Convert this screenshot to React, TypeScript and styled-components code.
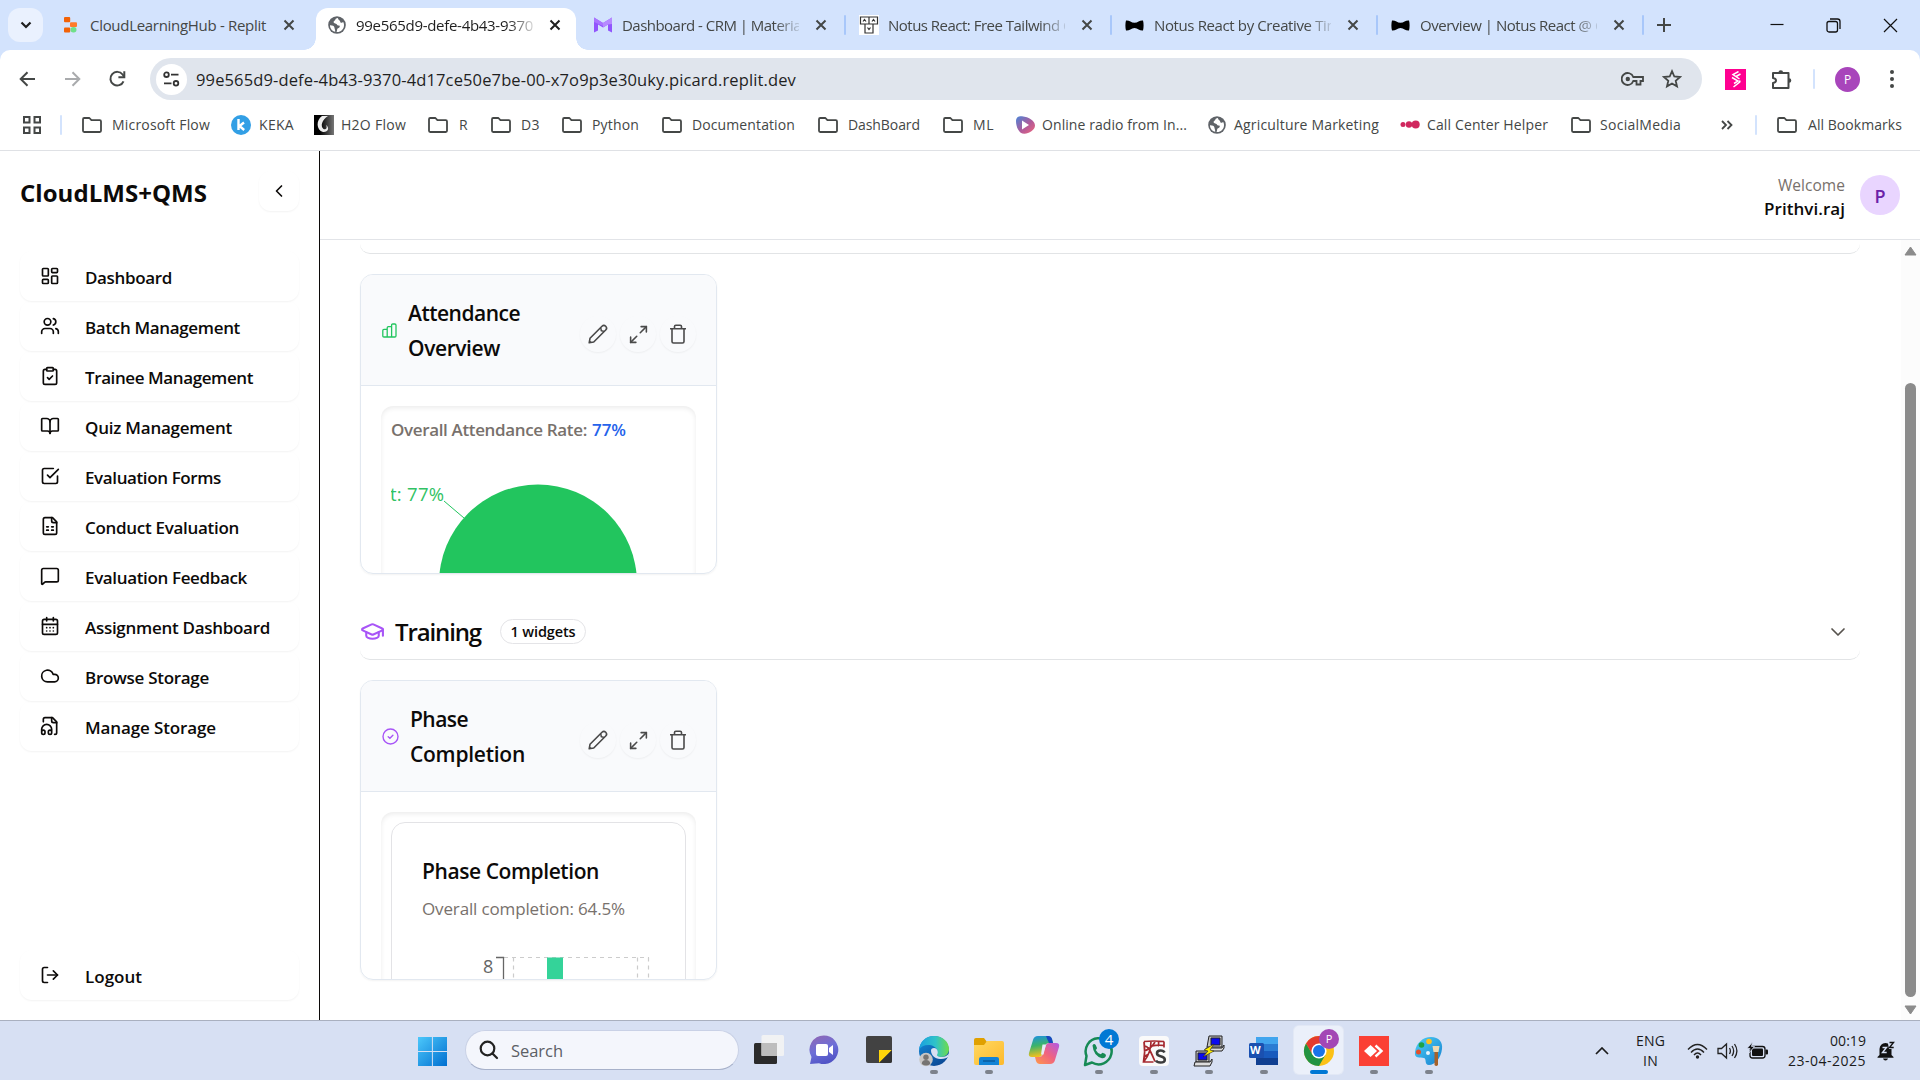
import React, { useLayoutEffect, useRef } from "react";
import styled, { createGlobalStyle, css } from "styled-components";
import {
  LayoutDashboard, Users, ClipboardCheck, BookOpen, MessageSquare, CalendarDays, Cloud, LogOut,
  ChevronLeft, ChevronDown, Maximize2, GraduationCap,
} from "lucide-react";

const Global = createGlobalStyle`
  * { box-sizing: border-box; }
  html, body { margin: 0; padding: 0; overflow: hidden; }
  body { font-family: "Open Sans", "Noto Sans", sans-serif; color: #0c0a09; background: #fff; }
  svg { display: block; flex: none; }
`;

/* ---------- text with a fixed advance width ---------- */
const FitSpan = styled.span<{ $size: number; $weight?: number; $color?: string; $line?: number }>`
  display: inline-block;
  flex: none;
  white-space: pre;
  font-size: ${(p) => p.$size}px;
  font-weight: ${(p) => p.$weight ?? 400};
  line-height: ${(p) => p.$line ?? 24}px;
  ${(p) => p.$color && css`color: ${p.$color};`}
`;

type FitProps = { w: number; size: number; weight?: number; color?: string; line?: number; children: string };
function Fit({ w, size, weight, color, line, children }: FitProps) {
  const ref = useRef<HTMLSpanElement>(null);
  useLayoutEffect(() => {
    const el = ref.current;
    if (!el) return;
    el.style.letterSpacing = "0px";
    const natural = el.getBoundingClientRect().width;
    el.style.letterSpacing = `${(w - natural) / children.length}px`;
  }, [w, children]);
  return <FitSpan ref={ref} $size={size} $weight={weight} $color={color} $line={line}>{children}</FitSpan>;
}

/* ---------- shell ---------- */
const Screen = styled.div`
  width: 1920px;
  height: 1080px;
  display: flex;
  flex-direction: column;
  overflow: hidden;
  background: #fff;
`;

/* ---------- tab strip ---------- */
const Strip = styled.div`
  height: 50px;
  flex: none;
  display: flex;
  align-items: flex-start;
  background: #d3e3fd;
  padding: 8px 0 0 8px;
`;
const StripButton = styled.div`
  width: 35px;
  height: 34px;
  border-radius: 12px;
  background: #eaf1fe;
  display: grid;
  place-items: center;
  margin-right: 5px;
`;
const TabBox = styled.div<{ $active?: boolean }>`
  width: 266px;
  height: 42px;
  display: flex;
  align-items: center;
  position: relative;
  padding: 0 0 8px 12px;
  ${(p) => p.$active && css`
    &::before {
      content: "";
      position: absolute;
      inset: 0 4px 0 2px;
      background: #fff;
      border-radius: 12px 12px 0 0;
    }
    &::after {
      content: "";
      position: absolute;
      left: -10px;
      right: -8px;
      bottom: 0;
      height: 12px;
      background:
        radial-gradient(circle at 0 0, transparent 11.5px, #fff 12px) left / 12px 12px no-repeat,
        radial-gradient(circle at 100% 0, transparent 11.5px, #fff 12px) right / 12px 12px no-repeat;
    }
  `}
  > * { position: relative; }
`;
const Favicon = styled.span`
  width: 21px;
  display: grid;
  place-items: center;
`;
const TabTitle = styled.span`
  width: 177px;
  height: 24px;
  margin-left: 9px;
  overflow: hidden;
  display: flex;
  mask-image: linear-gradient(90deg, #000 86%, transparent 103%);
`;
const CloseX = styled.span`
  margin-left: 16px;
  width: 12px;
`;
const Divider = styled.span<{ $h?: number; $ml?: number; $mr?: number; $color?: string }>`
  width: 2px;
  height: ${(p) => p.$h ?? 20}px;
  border-radius: 1px;
  flex: none;
  background: ${(p) => p.$color ?? "#a8c7fa"};
  margin-left: ${(p) => p.$ml ?? 0}px;
  margin-right: ${(p) => p.$mr ?? 0}px;
`;
const NewTab = styled.div`
  height: 34px;
  width: 34px;
  margin-left: 3px;
  display: grid;
  place-items: center;
`;
const WindowButtons = styled.div`
  margin-left: auto;
  height: 34px;
  display: flex;
  align-items: center;
  gap: 42px;
  padding-right: 22px;
`;

/* ---------- address bar ---------- */
const ToolbarWrap = styled.div`
  background: #d3e3fd;
  flex: none;
`;
const Toolbar = styled.div`
  height: 58px;
  background: #fff;
  border-radius: 10px 10px 0 0;
  display: flex;
  align-items: center;
  padding: 0 23px 0 17px;
`;
const NavIcons = styled.div`
  width: 133px;
  display: flex;
  gap: 24px;
`;
const Omnibox = styled.div`
  width: 1552px;
  height: 42px;
  border-radius: 21px;
  background: #e0e5ed;
  display: flex;
  align-items: center;
  padding: 0 20px 0 6px;
  > span:nth-child(2) { margin-top: 2px; }
`;
const SiteInfo = styled.span`
  width: 31px;
  height: 31px;
  border-radius: 50%;
  background: #fff;
  display: grid;
  place-items: center;
  margin-right: 9px;
`;
const OmniActions = styled.span`
  margin-left: auto;
  display: flex;
  align-items: center;
  gap: 18px;
`;
const ToolActions = styled.div`
  margin-left: auto;
  display: flex;
  align-items: center;
`;
const PinkBadge = styled.span`
  width: 21px;
  height: 21px;
  background: #ff0090;
  display: grid;
  place-items: center;
`;
const SmallAvatar = styled.span`
  width: 25px;
  height: 25px;
  border-radius: 50%;
  background: #a845bb;
  color: #fff;
  font-size: 12px;
  display: grid;
  place-items: center;
`;

/* ---------- bookmarks ---------- */
const BookmarkBar = styled.div`
  height: 43px;
  flex: none;
  display: flex;
  align-items: center;
  padding: 0 0 9px 22px;
  border-bottom: 1px solid #dfe1e5;
`;
const BookmarkItem = styled.div<{ $ml: number; $gap: number }>`
  display: flex;
  align-items: center;
  gap: ${(p) => p.$gap}px;
  margin-left: ${(p) => p.$ml}px;
`;
const IconSlot = styled.span`
  width: 20px;
  display: grid;
  place-items: center;
`;

/* ---------- page ---------- */
const Page = styled.div`
  height: 869px;
  flex: none;
  display: flex;
`;
const Sidebar = styled.aside`
  width: 320px;
  border-right: 1px solid #0c0a09;
  padding: 20px 20px 20px;
  display: flex;
  flex-direction: column;
`;
const Brand = styled.div`
  display: flex;
  justify-content: space-between;
  align-items: center;
  height: 40px;
  > span:first-child { margin-top: 3px; }
`;
const Collapse = styled.span`
  width: 40px;
  height: 40px;
  border-radius: 12px;
  display: grid;
  place-items: center;
  box-shadow: 0 1px 2px rgba(0, 0, 0, 0.05);
`;
const NavList = styled.nav`
  margin-top: 40px;
  display: flex;
  flex-direction: column;
`;
const NavItem = styled.div`
  height: 50px;
  flex: none;
  border-radius: 12px;
  display: flex;
  align-items: center;
  gap: 25px;
  padding: 0 0 0 20px;
  box-shadow: 0 1px 2px rgba(0, 0, 0, 0.05);
  > span { margin-top: 3px; }
`;
const Footer = styled.div`
  margin-top: auto;
`;
const Main = styled.main`
  flex: 1;
  display: flex;
  flex-direction: column;
  min-width: 0;
`;
const TopBar = styled.header`
  height: 89px;
  flex: none;
  border-bottom: 1px solid #e2e4e8;
  display: flex;
  align-items: center;
  justify-content: flex-end;
  gap: 15px;
  padding-right: 20px;
`;
const Who = styled.div`
  display: flex;
  flex-direction: column;
  align-items: flex-end;
  margin-top: 3px;
`;
const Avatar = styled.span`
  width: 40px;
  height: 40px;
  border-radius: 50%;
  background: #e9d5ff;
  color: #6b21a8;
  font-size: 18px;
  font-weight: 600;
  line-height: 42px;
  text-align: center;
`;
const Body = styled.div`
  flex: 1;
  min-height: 0;
  display: flex;
`;
const Content = styled.div`
  width: 1581px;
  padding-left: 40px;
  overflow: hidden;
`;
const SectionBar = styled.div<{ $h: number; $mt?: number }>`
  width: 1500px;
  height: ${(p) => p.$h}px;
  margin-top: ${(p) => p.$mt ?? 0}px;
  border-bottom: 1px solid #e2e4e6;
  border-radius: 0 0 10px 10px;
  display: flex;
  align-items: center;
  padding: 0 10px 0 0;
`;
const Badge = styled.span`
  height: 25px;
  width: 86px;
  margin-left: 19px;
  border: 1px solid #e4e4e7;
  border-radius: 13px;
  display: flex;
  justify-content: center;
  align-items: center;
`;
const Push = styled.span`
  margin-left: auto;
`;
const Card = styled.section`
  width: 357px;
  height: 300px;
  margin-top: 20px;
  border: 1px solid #e2e8f0;
  border-radius: 13px;
  overflow: hidden;
  box-shadow: 0 1px 2px rgba(0, 0, 0, 0.05);
`;
const CardHead = styled.div`
  height: 111px;
  background: #f9fafc;
  border-bottom: 1px solid #e2e8f0;
  display: flex;
  align-items: center;
  padding: 0 20px 0 21px;
`;
const CardTitle = styled.h3`
  margin: 2px 0 0 11px;
  display: flex;
  flex-direction: column;
  align-items: flex-start;
`;
const HeadIcon = styled.span`
  margin-top: 0;
`;
const CardActions = styled.div`
  margin-left: auto;
  margin-top: 8px;
  display: flex;
  gap: 4px;
`;
const RoundButton = styled.span`
  width: 36px;
  height: 36px;
  border-radius: 50%;
  display: grid;
  place-items: center;
  color: #4a4a4a;
  box-shadow: 0 1px 2px rgba(0, 0, 0, 0.05);
`;
const Panel = styled.div`
  width: 315px;
  height: 300px;
  margin: 20px 0 0 20px;
  border-radius: 12px;
  padding: 10px;
  box-shadow: inset 0 2px 5px rgba(0, 0, 0, 0.08);
`;
const Rate = styled.div`
  height: 27px;
  display: flex;
  align-items: center;
  gap: 5px;
`;
const InnerCard = styled.div`
  height: 300px;
  border: 1px solid #e3e3e6;
  border-radius: 14px;
  background: #fff;
  padding: 31px 30px;
  display: flex;
  flex-direction: column;
  align-items: flex-start;
`;
const ChartSlot = styled.div`
  padding: 1px 0 0 1px;
`;

/* ---------- scrollbar ---------- */
const Scrollbar = styled.div`
  width: 19px;
  background: #fcfcfc;
  display: flex;
  flex-direction: column;
  align-items: center;
  padding: 6px 0 5px;
`;
const Thumb = styled.span`
  width: 11px;
  height: 614px;
  margin: auto 0 8px;
  border-radius: 6px;
  background: #8b8b8b;
`;

/* ---------- taskbar ---------- */
const Taskbar = styled.footer`
  height: 60px;
  flex: none;
  border-top: 1px solid #a9b0bf;
  background: #d7e0f3;
  display: flex;
  align-items: flex-start;
  padding-left: 417px;
`;
const Start = styled.span`
  padding-top: 15px;
`;
const SearchPill = styled.div`
  width: 274px;
  height: 40px;
  margin: 9px 0 0 18px;
  border-radius: 20px;
  background: #f4f6fc;
  border: 1px solid #c9d1e6;
  border-bottom-color: #a7b1ca;
  display: flex;
  align-items: center;
  gap: 12px;
  padding-left: 13px;
  > span { margin-top: 1px; }
`;
const Apps = styled.div`
  display: flex;
  margin-left: 2px;
`;
const AppSlot = styled.div<{ $active?: boolean }>`
  width: 49px;
  height: 48px;
  margin: 5px 3px 0;
  border-radius: 5px;
  display: flex;
  flex-direction: column;
  align-items: center;
  justify-content: space-between;
  padding-top: 9px;
  position: relative;
  ${(p) => p.$active && css`
    background: #ebf0fa;
    box-shadow: 0 0 0 1px #e2e8f5;
  `}
`;
const RunMark = styled.span<{ $active?: boolean }>`
  width: ${(p) => (p.$active ? 18 : 8)}px;
  height: 4px;
  border-radius: 2px;
  background: ${(p) => (p.$active ? "#0078d4" : "#7d828c")};
`;
const Count = styled.span<{ $color: string; $small?: boolean }>`
  position: absolute;
  top: 3px;
  left: 25px;
  width: 20px;
  height: 20px;
  border-radius: 50%;
  background: ${(p) => p.$color};
  color: #fff;
  font-size: ${(p) => (p.$small ? 11 : 15)}px;
  line-height: 20px;
  text-align: center;
`;
const Tray = styled.div`
  margin-left: auto;
  height: 59px;
  display: flex;
  align-items: center;
  padding-right: 25px;
`;
const TrayStack = styled.div<{ $ml: number; $right?: boolean }>`
  margin-left: ${(p) => p.$ml}px;
  display: flex;
  flex-direction: column;
  align-items: ${(p) => (p.$right ? "flex-end" : "center")};
`;
const TrayIcon = styled.span<{ $ml: number }>`
  margin-left: ${(p) => p.$ml}px;
`;

/* ---------- drawings ---------- */
const Cross = ({ color = "#444746" }: { color?: string }) => (
  <svg width="12" height="12" viewBox="0 0 12 12" stroke={color} strokeWidth="2"><path d="M1.5 1.5l9 9M10.5 1.5l-9 9" /></svg>
);
const Folder = () => (
  <svg width="20" height="16" viewBox="0 0 20 16" fill="none" stroke="#444746" strokeWidth="1.8" strokeLinejoin="round">
    <path d="M1 2.2Q1 1 2.2 1H7.4L9.4 3.2H17.8Q19 3.2 19 4.4V13.8Q19 15 17.8 15H2.2Q1 15 1 13.8Z" />
  </svg>
);
const Globe = ({ s = 19 }: { s?: number }) => (
  <svg width={s} height={s} viewBox="0 0 20 20">
    <circle cx="10" cy="10" r="9.8" fill="#5f6368" />
    <path d="M11 2.200C7.500 2.500 9 4.200 7.200 5.200 5.500 6.200 6 8 8 8.200 10.500 8.400 9.500 10.500 12 10.500 14 10.600 13 13 11.200 13.600 9.600 14.200 10.500 16 9.500 17.800 14 18.200 17.800 15 17.800 10 17.800 8.500 17.300 7.500 16.800 6.800 15 8.500 13.500 7 13.500 6 13.500 4.500 11.500 5 11 2.200Z" fill="#fff" />
    <path d="M2.200 10.300C4.500 10.200 7 11 7.200 13 7.400 14.800 8.200 15.500 8 17.500 4.500 16.800 2.200 14 2.200 10.300Z" fill="#fff" />
  </svg>
);
const ReplitLogo = () => (
  <svg width="13" height="16" viewBox="0 0 13 16">
    <rect width="6.200" height="5.200" rx="1" fill="#f26207" />
    <rect x="6" y="5.200" width="7" height="4.800" rx="1" fill="#ff7a2a" />
    <rect y="10.400" width="6.200" height="5.200" rx="1" fill="#f26207" />
    <rect x="6.500" y="10" width="6" height="5.500" rx="2.700" fill="#6fe08a" />
  </svg>
);
const MuiLogo = () => (
  <svg width="20" height="16" viewBox="0 0 20 16">
    <path d="M1 .500 10 6 19 .500V15.500l-4-2V7.500L10 10.500 5 7.500v6l-4 2Z" fill="#9155fd" />
    <path d="M10 6 19 .500V7L15 7.500 10 10.500Z" fill="#b78aff" />
    <path d="M1 .500 10 6V9L1 5Z" fill="#a974ff" />
  </svg>
);
const NotusLogo = () => (
  <svg width="20" height="20" viewBox="0 0 20 20" fill="none" stroke="#333" strokeWidth="1.200">
    <rect width="20" height="20" fill="#fff" stroke="none" />
    <path d="M1.500 2h17v7h-17ZM10 2v7M6 9v9h8V9M4 6.500l1.500-2L7 6.500M13 6.500l1.500-2 1.500 2M8.500 12.500l1.500 2 1.500-2" />
  </svg>
);
const BowTie = () => (
  <svg width="19" height="11" viewBox="0 0 19 11"><path d="M1 .500C4 0 6 2.500 9.500 2.800 13 2.500 15 0 18 .500 18.800 3 18.800 8 18 10.500 15 11 13 8.300 9.500 8 6 8.300 4 11 1 10.500.200 8 .200 3 1 .500Z" fill="#000" /></svg>
);
const Keka = () => (
  <svg width="20" height="20" viewBox="0 0 20 20"><circle cx="10" cy="10" r="10" fill="#329fe5" /><path d="M7.500 4v11M13 7.500 8.500 11 13.200 15" stroke="#fff" strokeWidth="2.400" fill="none" /></svg>
);
const H2O = () => (
  <svg width="20" height="20" viewBox="0 0 20 20">
    <defs><linearGradient id="h2o"><stop offset=".3" stopColor="#000" /><stop offset="1" stopColor="#777" /></linearGradient></defs>
    <rect width="20" height="20" fill="url(#h2o)" />
    <path d="M8 1C2 5 2 15 9 17 14 17.500 16 13 12 10 14 14 11 15 9.500 14 6 11 8 5 14 1Z" fill="#eee" />
  </svg>
);
const Radio = () => (
  <svg width="20" height="18" viewBox="0 0 20 18">
    <defs><linearGradient id="radio" x2="1" y2="1"><stop offset="0" stopColor="#4a86d8" /><stop offset=".55" stopColor="#b05a9a" /><stop offset="1" stopColor="#f2667a" /></linearGradient></defs>
    <path d="M1 5C1 1 4 0 7 .300 14 1 20 5 20 9.500 20 14 14 17.500 9.500 17.800 4 18 1 11 1 5Z" fill="url(#radio)" /><path d="M7 4.500 14 9 7 13.500Z" fill="#fff" />
  </svg>
);
const Dots3 = () => (
  <svg width="20" height="9" viewBox="0 0 20 9" fill="#d0275e"><circle cx="3" cy="4.500" r="2.500" /><circle cx="9" cy="4.500" r="3.200" /><circle cx="15.700" cy="4.500" r="4" /></svg>
);
const BarsIcon = () => (
  <svg width="15" height="15" viewBox="0 0 15 15" fill="none" stroke="#22c55e" strokeWidth="1.300">
    <path d="M.800 7.600Q.800 6.400 2 6.400H5.200V14H2Q.800 14 .800 12.800ZM5.200 14V5Q5.200 3.700 6.400 3.700H9.600V14ZM9.600 14V2.200Q9.600 1 10.800 1H12.800Q14 1 14 2.200V12.800Q14 14 12.800 14ZM5.200 14h4.400" />
  </svg>
);
const CheckCircle = () => (
  <svg width="17" height="17" viewBox="0 0 17 17" fill="none" stroke="#a855f7" strokeWidth="1.400" strokeLinecap="round"><circle cx="8.500" cy="8.500" r="7.500" /><path d="M6.200 8.700l1.700 1.500 3-3" /></svg>
);
const Pen = () => (
  <svg width="20" height="20" viewBox="0 0 20 20" fill="none" stroke="currentColor" strokeWidth="1.600" strokeLinejoin="round">
    <path d="M1.200 18.800 2 14.300 14 2.300a2.600 2.600 0 0 1 3.700 3.700L5.700 18Z" /><path d="M12.200 4.100Q13.200 4.400 13.300 6.700 15.700 6.800 15.900 7.800M1.800 17.500l1 .800" />
  </svg>
);
const Bin = () => (
  <svg width="18" height="20" viewBox="0 0 18 20" fill="none" stroke="currentColor" strokeWidth="1.600">
    <path d="M1 4.800h16M3 4.800V17.500Q3 19 4.500 19h9q1.500 0 1.500-1.500V4.800M5.500 4.500V2.500Q5.500 1.200 6.800 1.200h4.400q1.300 0 1.300 1.300v2" />
  </svg>
);
const L = { size: 20, strokeWidth: 2 };
const SheetIcon = () => (
  <svg width="20" height="20" viewBox="0 0 24 24" fill="none" stroke="currentColor" strokeWidth="2" strokeLinecap="round" strokeLinejoin="round">
    <path d="M15 2H6a2 2 0 0 0-2 2v16a2 2 0 0 0 2 2h12a2 2 0 0 0 2-2V7Z" /><path d="M14 2v4a2 2 0 0 0 2 2h4M8 13h2M14 13h2M8 17h2M14 17h2" />
  </svg>
);
const AudioFile = () => (
  <svg width="20" height="20" viewBox="0 0 24 24" fill="none" stroke="currentColor" strokeWidth="2" strokeLinecap="round" strokeLinejoin="round">
    <path d="M17.500 22H18a2 2 0 0 0 2-2V7l-5-5H6a2 2 0 0 0-2 2v3" /><path d="M14 2v4a2 2 0 0 0 2 2h4" />
    <path d="M2 19a2 2 0 1 1 4 0v1a2 2 0 1 1-4 0v-4a6 6 0 0 1 12 0v4a2 2 0 1 1-4 0v-1a2 2 0 1 1 4 0" />
  </svg>
);
const CheckBox = () => (
  <svg width="20" height="20" viewBox="0 0 24 24" fill="none" stroke="currentColor" strokeWidth="2" strokeLinecap="round" strokeLinejoin="round">
    <path d="m9 11 3 3L22 4" /><path d="M21 12v7a2 2 0 0 1-2 2H5a2 2 0 0 1-2-2V5a2 2 0 0 1 2-2h11" />
  </svg>
);

/* taskbar drawings */
const WinLogo = () => (
  <svg width="30" height="30" viewBox="0 0 30 30">
    <defs><linearGradient id="win" x2="1" y2="1"><stop offset="0" stopColor="#4cc8fb" /><stop offset="1" stopColor="#006fd0" /></linearGradient></defs>
    <path d="M1 1h13.900v13.900H1ZM15.900 1H30v13.900H15.900ZM1 15.900h13.900V30H1ZM15.900 15.900H30V30H15.900Z" fill="url(#win)" />
  </svg>
);
const TaskView = () => (
  <svg width="30" height="30" viewBox="0 0 30 30"><rect x="0" y="8" width="23" height="21" rx="1.500" fill="#2b2b2b" /><rect x="7.500" y="0" width="22.500" height="21" rx="1.500" fill="#f2f2f2" opacity=".95" /><rect x="7.500" y="8" width="15.500" height="13" fill="#bdbdbd" /></svg>
);
const Chat = () => (
  <svg width="30" height="30" viewBox="0 0 30 30">
    <defs><linearGradient id="chat" x1=".2" x2=".6" y2="1"><stop offset="0" stopColor="#8f68b5" /><stop offset=".5" stopColor="#6d6fd8" /><stop offset="1" stopColor="#4f52c4" /></linearGradient></defs>
    <path d="M15 .500a14.300 14.300 0 1 1-5 27.700L1 29l1.500-7A14.300 14.300 0 0 1 15 .500Z" fill="url(#chat)" /><rect x="7" y="9" width="12" height="12" rx="2" fill="#fff" /><path d="M20 13l4-3v10l-4-3Z" fill="#fff" />
  </svg>
);
const Sticky = () => (
  <svg width="30" height="30" viewBox="0 0 30 30"><rect x="2" y="1" width="26" height="27" rx="2" fill="#424242" /><path d="M15 15h13L15 28Z" fill="#ffd60a" /><path d="M28 15v11q0 2-2 2H15Z" fill="#333" /></svg>
);
const Edge = () => (
  <svg width="32" height="32" viewBox="0 0 32 32">
    <defs>
      <linearGradient id="edgeA" x2="1"><stop offset="0" stopColor="#1a9fe0" /><stop offset=".55" stopColor="#2fc3c9" /><stop offset="1" stopColor="#6fdc4a" /></linearGradient>
      <linearGradient id="edgeB" x2=".6" y2="1"><stop offset="0" stopColor="#1490df" /><stop offset="1" stopColor="#0b4b97" /></linearGradient>
    </defs>
    <circle cx="16" cy="16" r="15" fill="url(#edgeB)" />
    <path d="M1 15C2 6 8 1 16 1c9 0 15 6 15 13 0 5-4 8-8 8-3 0-5-1-4.500-2.500C21 16 18 11 12 10 7 9.500 3 11 1 15Z" fill="url(#edgeA)" />
    <path d="M13 15.500c0 5 4 8 9 8.500 4 .300 7-1 8.500-2.500l.5-3c-3 4-9 4.500-12 2-.5-.5 1-1.500.8-3.500C19.500 14.500 18 13 16 13c-2 0-3 1-3 2.500Z" fill="#d7e0f3" />
    <circle cx="8" cy="24.500" r="6.800" fill="#c8c6c4" /><circle cx="8" cy="22.300" r="2.700" fill="#767472" /><path d="M3.800 29q0-4 4.200-4t4.200 4q-4 3-8.400 0Z" fill="#767472" />
  </svg>
);
const Explorer = () => (
  <svg width="32" height="32" viewBox="0 0 32 32">
    <defs><linearGradient id="fold" x2="1" y2="1"><stop offset="0" stopColor="#ffd861" /><stop offset="1" stopColor="#fdb92b" /></linearGradient></defs>
    <path d="M1 5q0-2 2-2h8l3 4v5H1Z" fill="#e0a000" /><path d="M1 10h10l3-4h15q2 0 2 2v20q0 2-2 2H3q-2 0-2-2Z" fill="url(#fold)" />
    <path d="M6 30v-6q0-2 2-2h16q2 0 2 2v6Z" fill="#1283d6" /><path d="M10 26h12" stroke="#0a5b9e" strokeWidth="1.500" />
  </svg>
);
const Copilot = () => (
  <svg width="32" height="30" viewBox="0 0 32 30">
    <defs>
      <linearGradient id="cpA" y2="1" x2=".2"><stop offset="0" stopColor="#1b8fe8" /><stop offset=".5" stopColor="#3bb36a" /><stop offset="1" stopColor="#f0c01e" /></linearGradient>
      <linearGradient id="cpB" x1="1" x2="0" y2="1"><stop offset="0" stopColor="#b05ae6" /><stop offset=".5" stopColor="#f0637f" /><stop offset="1" stopColor="#ff9a4a" /></linearGradient>
    </defs>
    <path d="M10 1h10q3 0 4 3l1 4h-4q-3 0-4 3l-3 9q-1 2-3 2H4q-4 0-3-4L5 5q1-4 5-4Z" fill="url(#cpA)" />
    <path d="M22 29H12q-3 0-4-3l-1-4h4q3 0 4-3l3-9q1-2 3-2h7q4 0 3 4l-4 13q-1 4-5 4Z" fill="url(#cpB)" />
    <path d="M14.500 9.500h3.500l-2.500 10H13Z" fill="#e6ebf8" /><path d="M18 1h2q3 0 4 3l1 4h-4Q19 4 18 1Z" fill="#1848c0" />
  </svg>
);
const WhatsApp = () => (
  <svg width="32" height="32" viewBox="0 0 32 32" fill="none" stroke="#168a55" strokeWidth="2.500">
    <path d="M3.500 21A13 13 0 1 1 9 27.500L2 30Z" strokeLinejoin="round" />
    <path d="M9.500 10.500q1.500-2.500 3.200-.5l1.300 3q0 1.200-1.300 2 1.500 3 5 4.300l1.800-1.500q3 1 3.500 2.200-.5 3.500-4 3.200Q10.500 21 9.500 10.500Z" fill="#168a55" stroke="none" />
  </svg>
);
const RsIcon = () => (
  <svg width="32" height="32" viewBox="0 0 32 32" fill="none">
    <rect x="1" y="1" width="30" height="30" rx="4" fill="#fafafa" />
    <path d="M6 6.500q10-1 20 0M6 6.500q1.500 10-.5 20.500h10M6 16q7-2 11-9M13 6.500q0 11-7 20M11.500 14.500q3 6 5.500 12M14 11q6-1.500 12-.500M6 21.500l4-2M26 6.500v6M20.500 6.500q.5 3-.5 5M6 11q3 0 5 3" stroke="#a5292f" strokeWidth="1.700" />
    <path d="M26.500 17.500q-1-2-4-2-3.500 0-3.500 2.800 0 2.200 3.500 3 4.300 1 4.300 3.400 0 2.800-4.300 2.800-3.500 0-4.500-2" stroke="#3c3c3c" strokeWidth="2.600" />
  </svg>
);
const Putty = () => (
  <svg width="32" height="32" viewBox="0 0 32 32" stroke="#222" strokeWidth="1">
    <path d="M16 1h13v11H14Z" fill="#c4c4c4" /><path d="M18 3h9v7h-9Z" fill="#0a0af0" /><path d="M13 13h16l2-3v3l-2 3H13Z" fill="#ddd" />
    <path d="M3 16h13v11H3Z" fill="#c4c4c4" /><path d="M5 18h9v7H5Z" fill="#0a0af0" /><path d="M2 27h15l2-3v3l-2 4H1Z" fill="#ddd" />
    <path d="M21 9 11 15l4 1-5 6 11-6-4-1Z" fill="#ffee00" strokeWidth=".6" />
  </svg>
);
const Tiny = styled.span<{ $l: number; $t: number; $s: number }>`
  position: absolute;
  left: ${(p) => p.$l}px;
  top: ${(p) => p.$t}px;
  font-size: ${(p) => p.$s}px;
  line-height: 14px;
  font-weight: 700;
  color: #fff;
`;
const Word = () => (
  <>
    <svg width="32" height="32" viewBox="0 0 32 32">
      <rect x="8" y="2" width="22" height="8" fill="#41a5ee" /><rect x="8" y="9" width="22" height="7" fill="#2b7cd3" /><rect x="8" y="16" width="22" height="7" fill="#185abd" /><rect x="8" y="23" width="22" height="7" fill="#103f91" /><rect x="1" y="8" width="15" height="15" rx="1.500" fill="#1a50b0" />
    </svg>
    <Tiny $l={11} $t={17} $s={11}>W</Tiny>
  </>
);
const Chrome = () => (
  <svg width="32" height="32" viewBox="0 0 32 32">
    <circle cx="16" cy="16" r="15" fill="#fbc116" /><path d="M3 8.500A15 15 0 0 1 29 8.500H16L9.500 19.700Z" fill="#e33b2e" /><path d="M3 8.500A15 15 0 0 0 16 31l6.500-11.300-13 0Z" fill="#229342" />
    <circle cx="16" cy="16" r="7.600" fill="#fff" /><circle cx="16" cy="16" r="6" fill="#1a73e8" />
  </svg>
);
const AnyDesk = () => (
  <svg width="32" height="32" viewBox="0 0 32 32"><rect x="1" y="1" width="30" height="30" fill="#fb4034" /><path d="M6 16l6.500-6 6.500 6-6.500 6Z" fill="#fff" /><path d="M17.500 10.500 23.500 16l-6 5.500" fill="none" stroke="#fff" strokeWidth="2.400" /></svg>
);
const Paint = () => (
  <svg width="32" height="32" viewBox="0 0 32 32">
    <defs><linearGradient id="pnt" x2="1" y2="1"><stop offset="0" stopColor="#4fd0f5" /><stop offset="1" stopColor="#1580d0" /></linearGradient></defs>
    <path d="M2 17C3 8 10 2 18 2c8 0 12 5 11 12-1 9-7 16-13 16-5 0-2-6-5-7-4-1-10 1-9-6Z" fill="url(#pnt)" />
    <circle cx="16" cy="6.500" r="2.800" fill="#ffc020" /><circle cx="8.500" cy="10" r="2.800" fill="#1ea345" /><circle cx="5.500" cy="17" r="2.500" fill="#e2502c" /><circle cx="15" cy="18" r="2" fill="#e8f4fb" />
    <path d="M19.500 11h7l-1 6h-5Z" fill="#f0d9b0" /><path d="M21.500 17h3.500v13q-1.700 2-3.500 0Z" fill="#a5612a" />
  </svg>
);

const tabs = [
  { icon: <ReplitLogo />, title: "CloudLearningHub - Replit", w: 176, full: true },
  { icon: <Globe s={18} />, title: "99e565d9-defe-4b43-9370", w: 177, active: true },
  { icon: <MuiLogo />, title: "Dashboard - CRM | Materia", w: 179, sep: true },
  { icon: <NotusLogo />, title: "Notus React: Free Tailwind C", w: 184, sep: true },
  { icon: <BowTie />, title: "Notus React by Creative Tim", w: 186, sep: true },
  { icon: <BowTie />, title: "Overview | Notus React @ C", w: 184, sep: true },
];

const FullTitle = styled(TabTitle)`
  mask-image: none;
`;

const bookmarks: { icon: React.ReactNode; label: string; ml: number; gap: number; w: number }[] = [
  { icon: <Folder />, label: "Microsoft Flow", ml: 20, gap: 10, w: 98 },
  { icon: <Keka />, label: "KEKA", ml: 21, gap: 8, w: 35 },
  { icon: <H2O />, label: "H2O Flow", ml: 20, gap: 7, w: 65 },
  { icon: <Folder />, label: "R", ml: 22, gap: 11, w: 9 },
  { icon: <Folder />, label: "D3", ml: 23, gap: 10, w: 19 },
  { icon: <Folder />, label: "Python", ml: 22, gap: 10, w: 47 },
  { icon: <Folder />, label: "Documentation", ml: 23, gap: 10, w: 103 },
  { icon: <Folder />, label: "DashBoard", ml: 23, gap: 10, w: 72 },
  { icon: <Folder />, label: "ML", ml: 23, gap: 10, w: 21 },
  { icon: <Radio />, label: "Online radio from In...", ml: 21, gap: 7, w: 145 },
  { icon: <Globe s={18} />, label: "Agriculture Marketing", ml: 20, gap: 7, w: 145 },
  { icon: <Dots3 />, label: "Call Center Helper", ml: 21, gap: 7, w: 121 },
  { icon: <Folder />, label: "SocialMedia", ml: 23, gap: 9, w: 81 },
];

const nav: { icon: React.ReactNode; label: string; w: number }[] = [
  { icon: <LayoutDashboard {...L} />, label: "Dashboard", w: 87 },
  { icon: <Users {...L} />, label: "Batch Management", w: 155 },
  { icon: <ClipboardCheck {...L} />, label: "Trainee Management", w: 168 },
  { icon: <BookOpen {...L} />, label: "Quiz Management", w: 147 },
  { icon: <CheckBox />, label: "Evaluation Forms", w: 136 },
  { icon: <SheetIcon />, label: "Conduct Evaluation", w: 154 },
  { icon: <MessageSquare {...L} />, label: "Evaluation Feedback", w: 162 },
  { icon: <CalendarDays {...L} />, label: "Assignment Dashboard", w: 185 },
  { icon: <Cloud {...L} />, label: "Browse Storage", w: 124 },
  { icon: <AudioFile />, label: "Manage Storage", w: 131 },
];

const apps: { icon: React.ReactNode; run?: boolean; active?: boolean; badge?: React.ReactNode }[] = [
  { icon: <TaskView /> },
  { icon: <Chat /> },
  { icon: <Sticky /> },
  { icon: <Edge />, run: true },
  { icon: <Explorer />, run: true },
  { icon: <Copilot /> },
  { icon: <WhatsApp />, run: true, badge: <Count $color="#0078d4">4</Count> },
  { icon: <RsIcon />, run: true },
  { icon: <Putty />, run: true },
  { icon: <Word />, run: true },
  { icon: <Chrome />, run: true, active: true, badge: <Count $color="#a347b5" $small>P</Count> },
  { icon: <AnyDesk />, run: true },
  { icon: <Paint />, run: true },
];

const Actions = () => (
  <CardActions>
    <RoundButton><Pen /></RoundButton>
    <RoundButton><Maximize2 size={21} strokeWidth={1.800} /></RoundButton>
    <RoundButton><Bin /></RoundButton>
  </CardActions>
);

const PieText = styled.text`
  font-size: 18.500px;
  fill: #31c264;
`;
const AxisText = styled.text`
  font-size: 18px;
  fill: #666;
`;

export default function App() {
  return (
    <Screen>
      <Global />
      <Strip>
        <StripButton>
          <svg width="12" height="8" viewBox="0 0 12 8" fill="none" stroke="#1f1f1f" strokeWidth="2.200"><path d="M1.500 1.500 6 6l4.500-4.500" /></svg>
        </StripButton>
        {tabs.map((t) => {
          const Title = t.full ? FullTitle : TabTitle;
          return (
            <TabBox key={t.title} $active={t.active}>
              <Favicon>{t.icon}</Favicon>
              <Title><Fit w={t.w} size={15} color={t.active ? "#1f1f1f" : "#444746"}>{t.title}</Fit></Title>
              <CloseX><Cross color={t.active ? "#1f1f1f" : "#444746"} /></CloseX>
              {t.sep && <Divider $ml={17} />}
            </TabBox>
          );
        })}
        <NewTab>
          <svg width="14" height="14" viewBox="0 0 14 14" stroke="#444746" strokeWidth="2"><path d="M7 0v14M0 7h14" /></svg>
        </NewTab>
        <WindowButtons>
          <svg width="14" height="14" viewBox="0 0 14 14" stroke="#111" strokeWidth="1.200"><path d="M.500 6.500h13" /></svg>
          <svg width="15" height="15" viewBox="0 0 15 15" fill="none" stroke="#111" strokeWidth="1.300"><rect x="1" y="3.500" width="10.500" height="10.500" rx="2" /><path d="M4 1h7.500q2.500 0 2.500 2.500V11" /></svg>
          <svg width="15" height="15" viewBox="0 0 15 15" stroke="#111" strokeWidth="1.200"><path d="M1 1l13 13M14 1 1 14" /></svg>
        </WindowButtons>
      </Strip>

      <ToolbarWrap>
        <Toolbar>
          <NavIcons>
            <svg width="21" height="20" viewBox="0 0 21 20" fill="none" stroke="#444746" strokeWidth="2"><path d="M18 10H4M10.500 3.200 3.700 10l6.800 6.800" /></svg>
            <svg width="21" height="20" viewBox="0 0 21 20" fill="none" stroke="#a9abad" strokeWidth="2"><path d="M3 10h14M10.500 3.200 17.300 10l-6.800 6.800" /></svg>
            <svg width="21" height="20" viewBox="0 0 21 20" fill="none" stroke="#444746" strokeWidth="2"><path d="M16.500 12.300A6.800 6.800 0 1 1 15.600 5.500L17.200 7.800" /><path d="M17.300 2.300V8.200H11.400" /></svg>
          </NavIcons>
          <Omnibox>
            <SiteInfo>
              <svg width="17" height="16" viewBox="0 0 17 16" fill="none" stroke="#333" strokeWidth="1.800"><circle cx="3.500" cy="3.700" r="2.300" /><path d="M8 3.700h7.500M1 12.300h7.500" /><circle cx="13" cy="12.300" r="2.300" /></svg>
            </SiteInfo>
            <Fit w={600} size={16.5} color="#1f1f1f">99e565d9-defe-4b43-9370-4d17ce50e7be-00-x7o9p3e30uky.picard.replit.dev</Fit>
            <OmniActions>
              <svg width="23" height="14" viewBox="0 0 23 14" fill="none" stroke="#444746" strokeWidth="1.800"><path d="M12.300 5A6 6 0 1 0 12.300 9H15.500V12.500H19.500V9H22V5Z" /><circle cx="6.800" cy="7" r="2.200" fill="#444746" stroke="none" /></svg>
              <svg width="20" height="20" viewBox="0 0 20 20" fill="none" stroke="#444746" strokeWidth="1.800"><path d="M10 2.200l2.300 5.300 5.700.500-4.300 3.800 1.300 5.600L10 14.500l-5 2.900 1.300-5.600L2 8l5.700-.500Z" /></svg>
            </OmniActions>
          </Omnibox>
          <ToolActions>
            <PinkBadge><svg width="12" height="17" viewBox="0 0 12 17" fill="none" stroke="#fff" strokeWidth="1.500"><path d="M8.500 0.500 3 3.500l6.500 4.500M10.500 3 6 5.500M2 6.500l6 3.500-4 2.500M10 9.500l-.3 1.500L3.500 16" /></svg></PinkBadge>
            <TrayIcon $ml={25}><svg width="21" height="21" viewBox="0 0 21 21" fill="none" stroke="#444746" strokeWidth="2"><path d="M2 4h15.500v15H2v-5Q5 13.500 5 11.500T2 9Z" strokeLinejoin="round" /><path d="M7.500 3.500a2.300 2.300 0 0 1 4.600 0ZM18 9.200a2.300 2.300 0 0 1 0 4.600Z" fill="#444746" stroke="none" /></svg></TrayIcon>
            <Divider $h={20} $ml={21} $mr={20} $color="#d3e3fd" />
            <SmallAvatar>P</SmallAvatar>
            <TrayIcon $ml={27}><svg width="10" height="20" viewBox="0 0 10 20" fill="#444746"><circle cx="5" cy="3" r="2" /><circle cx="5" cy="10" r="2" /><circle cx="5" cy="17" r="2" /></svg></TrayIcon>
          </ToolActions>
        </Toolbar>
      </ToolbarWrap>

      <BookmarkBar>
        <svg width="20" height="20" viewBox="0 0 20 20" fill="none" stroke="#444746" strokeWidth="2"><path d="M2 2h5.500v5.500H2ZM12.500 2H18v5.500h-5.500ZM2 12.500h5.500V18H2ZM12.500 12.500H18V18h-5.500Z" /></svg>
        <Divider $ml={18} $color="#d3e3fd" />
        {bookmarks.map((b) => (
          <BookmarkItem key={b.label} $ml={b.ml} $gap={b.gap}>
            <IconSlot>{b.icon}</IconSlot>
            <Fit w={b.w} size={14} color="#444746">{b.label}</Fit>
          </BookmarkItem>
        ))}
        <BookmarkItem $ml={40} $gap={0}>
          <svg width="12" height="10" viewBox="0 0 12 10" fill="none" stroke="#444746" strokeWidth="1.800"><path d="M1 1l4 4-4 4M6.500 1l4 4-4 4" /></svg>
        </BookmarkItem>
        <Divider $ml={22} $color="#d3e3fd" />
        <BookmarkItem $ml={20} $gap={11}>
          <IconSlot><Folder /></IconSlot>
          <Fit w={94} size={14} color="#444746">All Bookmarks</Fit>
        </BookmarkItem>
      </BookmarkBar>

      <Page>
        <Sidebar>
          <Brand>
            <Fit w={187} size={24} weight={700} line={44}>CloudLMS+QMS</Fit>
            <Collapse><ChevronLeft size={20} strokeWidth={2} /></Collapse>
          </Brand>
          <NavList>
            {nav.map((n) => (
              <NavItem key={n.label}>
                {n.icon}
                <Fit w={n.w} size={17} weight={600}>{n.label}</Fit>
              </NavItem>
            ))}
          </NavList>
          <Footer>
            <NavItem>
              <LogOut {...L} />
              <Fit w={57} size={17} weight={600}>Logout</Fit>
            </NavItem>
          </Footer>
        </Sidebar>

        <Main>
          <TopBar>
            <Who>
              <Fit w={67} size={15.5} color="#78716c">Welcome</Fit>
              <Fit w={81} size={17} weight={600}>Prithvi.raj</Fit>
            </Who>
            <Avatar>P</Avatar>
          </TopBar>
          <Body>
            <Content>
              <SectionBar $h={14} />
              <Card>
                <CardHead>
                  <HeadIcon><BarsIcon /></HeadIcon>
                  <CardTitle>
                    <Fit w={112} size={21} weight={600} line={35}>Attendance</Fit>
                    <Fit w={92} size={21} weight={600} line={35}>Overview</Fit>
                  </CardTitle>
                  <Actions />
                </CardHead>
                <Panel>
                  <Rate>
                    <Fit w={196} size={17} weight={600} color="#78716c">Overall Attendance Rate:</Fit>
                    <Fit w={34} size={17} weight={600} color="#2563eb">77%</Fit>
                  </Rate>
                  <svg width="295" height="146" viewBox="0 0 295 146">
                    <PieText x="-1" y="57.500" textLength="54" lengthAdjust="spacing">t: 77%</PieText>
                    <path d="M53 58 73 75" stroke="#22c55e" fill="none" />
                    <circle cx="147" cy="140.500" r="99" fill="#22c55e" />
                  </svg>
                </Panel>
              </Card>

              <SectionBar $h={56} $mt={30}>
                <GraduationCap size={25} strokeWidth={2} color="#a855f7" />
                <TrayIcon $ml={10}><Fit w={86} size={24} weight={600} line={42}>Training</Fit></TrayIcon>
                <Badge><Fit w={65} size={14.5} weight={600} line={23}>1 widgets</Fit></Badge>
                <Push><ChevronDown size={24} strokeWidth={1.700} color="#57534e" /></Push>
              </SectionBar>

              <Card>
                <CardHead>
                  <HeadIcon><CheckCircle /></HeadIcon>
                  <CardTitle>
                    <Fit w={58} size={21} weight={600} line={35}>Phase</Fit>
                    <Fit w={115} size={21} weight={600} line={35}>Completion</Fit>
                  </CardTitle>
                  <Actions />
                </CardHead>
                <Panel>
                  <InnerCard>
                    <Fit w={177} size={21} weight={600} line={34}>Phase Completion</Fit>
                    <Fit w={203} size={17} color="#78716c" line={42}>Overall completion: 64.5%</Fit>
                    <ChartSlot>
                      <svg width="232" height="60" viewBox="0 0 232 60">
                        <g fill="none" stroke="#ccc" strokeDasharray="4 4" strokeWidth="1.200">
                          <path d="M81 26.500H226M90.500 26.500V60M214.500 26.500V60M225.500 26.500V60" />
                        </g>
                        <path d="M73 26.500h7.500V60" fill="none" stroke="#666" strokeWidth="1.300" />
                        <rect x="124" y="26.500" width="16" height="40" fill="#34d399" />
                        <AxisText x="60" y="42">8</AxisText>
                      </svg>
                    </ChartSlot>
                  </InnerCard>
                </Panel>
              </Card>
            </Content>
            <Scrollbar>
              <svg width="13" height="10" viewBox="0 0 13 10"><path d="M6.500 1 12 9H1Z" fill="#8b8b8b" stroke="#8b8b8b" strokeLinejoin="round" /></svg>
              <Thumb />
              <svg width="13" height="10" viewBox="0 0 13 10"><path d="M6.500 9 1 1h11Z" fill="#8b8b8b" stroke="#8b8b8b" strokeLinejoin="round" /></svg>
            </Scrollbar>
          </Body>
        </Main>
      </Page>

      <Taskbar>
        <Start><WinLogo /></Start>
        <SearchPill>
          <svg width="20" height="20" viewBox="0 0 20 20" fill="none" stroke="#222" strokeWidth="2.200" strokeLinecap="round"><circle cx="8.500" cy="8.500" r="6.800" /><path d="M13.500 13.500l4.500 4.500" /></svg>
          <Fit w={52} size={16.5} color="#5c5f66">Search</Fit>
        </SearchPill>
        <Apps>
          {apps.map((a, i) => (
            <AppSlot key={i} $active={a.active}>
              {a.icon}
              {a.badge}
              {a.run && <RunMark $active={a.active} />}
            </AppSlot>
          ))}
        </Apps>
        <Tray>
          <svg width="14" height="8" viewBox="0 0 14 8" fill="none" stroke="#1b1b1b" strokeWidth="1.700"><path d="M1 7l6-6 6 6" /></svg>
          <TrayStack $ml={27}>
            <Fit w={29} size={14} line={20} color="#1b1b1b">ENG</Fit>
            <Fit w={15} size={14} line={20} color="#1b1b1b">IN</Fit>
          </TrayStack>
          <TrayIcon $ml={22}>
            <svg width="21" height="16" viewBox="0 0 21 16" fill="none" stroke="#222" strokeWidth="1.400"><path d="M1 6.500Q10.500-3.500 20 6.500M4 9.500Q10.500 2.500 17 9.500M7 12Q10.500 8 14 12" /><circle cx="10.500" cy="14" r="1.700" fill="#222" stroke="none" /></svg>
          </TrayIcon>
          <TrayIcon $ml={9}>
            <svg width="21" height="18" viewBox="0 0 21 18" fill="none" stroke="#222" strokeWidth="1.300"><path d="M1 6.500h3.500L9.500 2v14l-5-4.500H1ZM12.500 6q1.800 3 0 6M15 4q3.300 5 0 10M17.500 2q4.800 7 0 14" /></svg>
          </TrayIcon>
          <TrayIcon $ml={9}>
            <svg width="22" height="18" viewBox="0 0 22 18"><rect x="3" y="4.500" width="15" height="11.500" rx="2.500" fill="none" stroke="#111" strokeWidth="1.300" /><rect x="5" y="6.500" width="11" height="7.500" rx="1" fill="#111" /><rect x="18.500" y="7.500" width="2.500" height="5" rx="1" fill="#111" /><path d="M5.500 0 0 6.500h3L2 11 7.500 4.500h-3Z" fill="#111" stroke="#d7e0f3" strokeWidth=".8" /></svg>
          </TrayIcon>
          <TrayStack $ml={19} $right>
            <Fit w={36} size={14} line={20} color="#1b1b1b">00:19</Fit>
            <Fit w={78} size={14} line={20} color="#1b1b1b">23-04-2025</Fit>
          </TrayStack>
          <TrayIcon $ml={11}>
            <svg width="18" height="20" viewBox="0 0 18 20" fill="#111"><path d="M2.500 14V8Q3 2.500 8.500 2 14 2.500 14.500 8v6l2 2v.8H.500V16ZM6 17.500h5q-.5 2-2.500 2T6 17.500Z" /><path d="M5.500 6.500H9.500L5.500 11.500H9.700" stroke="#d7e0f3" strokeWidth="1.400" fill="none" /><path d="M10.500 0H18V8H12Z" fill="#d7e0f3" /><path d="M12.500 1.500H16.500L12.500 6.500H16.700" stroke="#111" strokeWidth="1.400" fill="none" /></svg>
          </TrayIcon>
        </Tray>
      </Taskbar>
    </Screen>
  );
}
